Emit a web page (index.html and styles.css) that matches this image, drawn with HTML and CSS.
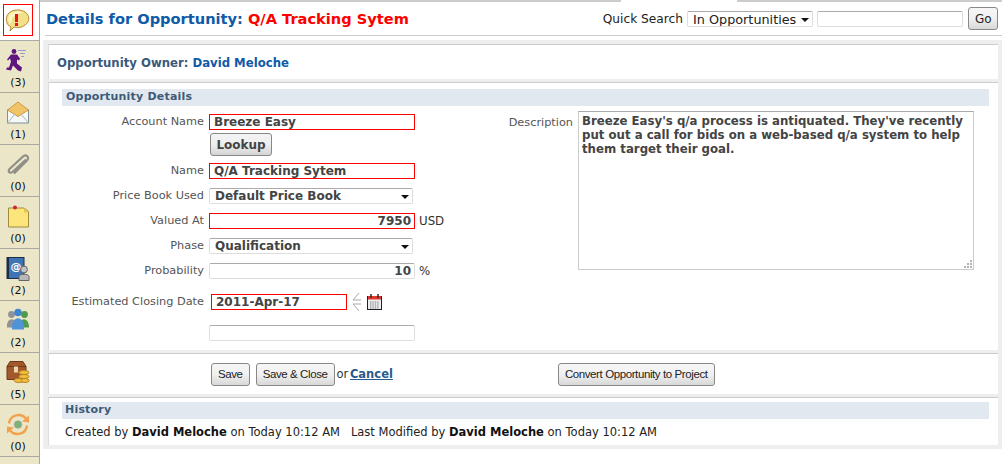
FILE: index.html
```html
<!DOCTYPE html>
<html lang="en">
<head>
    <meta charset="UTF-8">
    <link rel="stylesheet" href="styles.css">
    <title>Details for Opportunity</title>
</head>
<body>
    <nav class="sidebar">
        <div class="alert-box">
            <svg width="28" height="30" viewBox="0 0 28 30">
                <path d="M7 22 C2 20 1 13 4 9 C8 4 17 4 21 7 C26 10 26 17 21 20 C17 23 13 23 10 22 L6 26 Z" fill="#f5e08a" stroke="#b98a2e"/>
                <path d="M6 19 C3 15 4 10 8 8 C11 6 17 6 19 8 C15 8 9 10 8 14 C8 16 7 18 6 19 Z" fill="#fdf6c8"/>
                <rect x="11" y="9" width="3" height="8" fill="#e8141c"/>
                <rect x="11" y="18" width="3" height="3" fill="#e8141c"/>
            </svg>
        </div>
        <a class="side-item">
            <svg width="24" height="24" viewBox="0 0 24 24">
                <circle cx="8" cy="3" r="2.4" fill="#5e1580"/>
                <path d="M5 6 L11 6 L14 10 L13 12 L11 11 L11 15 L16 19 L15 23 L12 22 L7 17 L5 22 L0 21 L1 19 L3 19 L5 13 L4 10 L2 12 L1 11 Z" fill="#5e1580"/>
                <path d="M12 2 H20 M14 5 H19 M15 8 H18" stroke="#9a9ac8"/>
            </svg>
            <span>(3)</span>
        </a>
        <a class="side-item">
            <svg width="24" height="24" viewBox="0 0 24 24">
                <rect x="1.5" y="9.5" width="21" height="13" fill="#f6f8f6" stroke="#7f9098"/>
                <path d="M1.5 9.5 L12 1.5 L22.5 9.5 L12 16 Z" fill="#f2c468" stroke="#c99a48"/>
                <path d="M1.5 22.5 L9 13.5 M22.5 22.5 L15 13.5" stroke="#a9b8bc"/>
            </svg>
            <span>(1)</span>
        </a>
        <a class="side-item">
            <svg width="24" height="24" viewBox="0 0 24 24">
                <path d="M20 6 L7 18 C4 21 1 18 4 15 L17 3 C20 0 24 4 21 7 L8 20" fill="none" stroke="#8f8f88" stroke-width="2.2" transform="translate(0 1)"/>
            </svg>
            <span>(0)</span>
        </a>
        <a class="side-item">
            <svg width="24" height="24" viewBox="0 0 24 24">
                <path d="M2.5 3.5 H18 L22.5 7 V22.5 H2.5 Z" fill="#fce67c" stroke="#a08a3c"/>
                <path d="M18 3.5 V8 H22.5 Z" fill="#e6c850"/>
                <circle cx="9" cy="3" r="2" fill="#d0223a"/>
            </svg>
            <span>(0)</span>
        </a>
        <a class="side-item">
            <svg width="24" height="24" viewBox="0 0 24 24">
                <rect x="1" y="1" width="17" height="21" fill="#3f74b4" stroke="#1c2c44"/>
                <rect x="1" y="1" width="2" height="21" fill="#1c2c44"/>
                <text class="at-sign" x="4.5" y="13">@</text>
                <circle cx="18" cy="13" r="3.4" fill="#c4c4c4" stroke="#666"/>
                <path d="M13 24 V20 C13 17 23 17 23 20 V24 Z" fill="#b8b8b8" stroke="#666"/>
            </svg>
            <span>(2)</span>
        </a>
        <a class="side-item">
            <svg width="24" height="24" viewBox="0 0 24 24">
                <circle cx="5.5" cy="6" r="3.4" fill="#8f9296"/>
                <path d="M1 19 C0 8 11 8 11 19 Z" fill="#8f9296"/>
                <circle cx="18.5" cy="6" r="3.4" fill="#4f9a4c"/>
                <path d="M13 19 C13 8 23 8 23 19 Z" fill="#4f9a4c"/>
                <circle cx="12" cy="4" r="3.8" fill="#3f86cc"/>
                <path d="M6 21 C5 6 19 6 18 21 Z" fill="#4f94d8"/>
            </svg>
            <span>(2)</span>
        </a>
        <a class="side-item">
            <svg width="24" height="24" viewBox="0 0 24 24">
                <path d="M1 6 L4 1 H17 L20 6 V19 H1 Z" fill="#a3582c" stroke="#6a3a1e"/>
                <path d="M1 6 H20" stroke="#6a3a1e"/>
                <rect x="8" y="6" width="4" height="6" fill="#e8d8b0"/>
                <ellipse cx="18" cy="12" rx="5" ry="2" fill="#f2c040" stroke="#b88420"/>
                <ellipse cx="18" cy="16" rx="5" ry="2" fill="#f2c040" stroke="#b88420"/>
                <ellipse cx="13" cy="20" rx="5" ry="2" fill="#f2c040" stroke="#b88420"/>
                <ellipse cx="19" cy="20" rx="4" ry="2" fill="#f2c040" stroke="#b88420"/>
            </svg>
            <span>(5)</span>
        </a>
        <a class="side-item">
            <svg width="24" height="24" viewBox="0 0 24 24">
                <path d="M3 11 C4 2 15 0 20 6" fill="none" stroke="#f2a24c" stroke-width="2.4"/>
                <path d="M21 13 C20 22 9 24 4 18" fill="none" stroke="#f2a24c" stroke-width="2.4"/>
                <path d="M23 3 L23 10 L16 9 Z M1 21 L1 14 L8 15 Z" fill="#f2a24c"/>
                <circle cx="12" cy="12" r="3.8" fill="#7fb27a" stroke="#9aa59a" stroke-width=".6"/>
            </svg>
            <span>(0)</span>
        </a>
    </nav>

    <div class="page">
        <header class="topbar">
            <h1>Details for Opportunity: <em>Q/A Tracking Sytem</em></h1>
            <form class="quick-search">
                <label>Quick Search</label>
                <div class="select-wrap search-scope">
                    <select><option>In Opportunities</option></select>
                </div>
                <input class="search-box" type="text">
                <button class="btn go" type="button">Go</button>
            </form>
        </header>

        <main class="content">
            <section class="card owner">
                Opportunity Owner: <a>David Meloche</a>
            </section>

            <section class="card details">
                <h2 class="bar">Opportunity Details</h2>
                <div class="columns">
                    <div class="fields">
                        <div class="row">
                            <label>Account Name</label>
                            <input class="field req" type="text" value="Breeze Easy">
                        </div>
                        <div class="row lookup-row">
                            <label></label>
                            <button class="lookup" type="button">Lookup</button>
                        </div>
                        <div class="row">
                            <label>Name</label>
                            <input class="field req" type="text" value="Q/A Tracking Sytem">
                        </div>
                        <div class="row">
                            <label>Price Book Used</label>
                            <div class="select-wrap">
                                <select><option>Default Price Book</option></select>
                            </div>
                        </div>
                        <div class="row">
                            <label>Valued At</label>
                            <input class="field req num" type="text" value="7950">
                            <span class="unit">USD</span>
                        </div>
                        <div class="row">
                            <label>Phase</label>
                            <div class="select-wrap">
                                <select><option>Qualification</option></select>
                            </div>
                        </div>
                        <div class="row">
                            <label>Probability</label>
                            <input class="field num" type="text" value="10">
                            <span class="unit">%</span>
                        </div>
                        <div class="row date-row">
                            <label>Estimated Closing Date</label>
                            <input class="field req date" type="text" value="2011-Apr-17">
                            <svg class="arrows" width="9" height="20" viewBox="0 0 9 20">
                                <path d="M7 1 L1 8 H9 M7 19 L1 12 H9" fill="none" stroke="#a8a8a8"/>
                            </svg>
                            <svg class="calendar" width="15" height="16" viewBox="0 0 15 16">
                                <rect x="0.5" y="2.5" width="14" height="13" fill="#eee" stroke="#222"/>
                                <rect x="1" y="2" width="13" height="3.5" fill="#e2362f"/>
                                <path d="M4 0 V4 M11 0 V4" stroke="#222" stroke-width="1.4"/>
                                <path d="M3 8 H12 M3 10 H12 M3 12 H12 M3 14 H12" stroke="#778" stroke-dasharray="1.4 1"/>
                            </svg>
                        </div>
                        <div class="row">
                            <label></label>
                            <input class="field" type="text">
                        </div>
                    </div>
                    <div class="desc">
                        <label>Description</label>
                        <div class="desc-box">
                            <textarea>Breeze Easy's q/a process is antiquated. They've recently put out a call for bids on a web-based q/a system to help them target their goal.</textarea>
                            <svg class="grip" width="8" height="8" viewBox="0 0 8 8">
                                <path d="M6 0 h2 v2 h-2 z M3 3 h2 v2 h-2 z M6 3 h2 v2 h-2 z M0 6 h2 v2 h-2 z M3 6 h2 v2 h-2 z M6 6 h2 v2 h-2 z" fill="#b4b4b4"/>
                            </svg>
                        </div>
                    </div>
                </div>
            </section>

            <section class="card actions">
                <button class="btn" type="button">Save</button>
                <button class="btn" type="button">Save &amp; Close</button>
                <span class="or">or <a>Cancel</a></span>
                <button class="btn convert" type="button">Convert Opportunity to Project</button>
            </section>

            <section class="card history">
                <h2 class="bar">History</h2>
                <p>Created by <b>David Meloche</b> on Today 10:12 AM &nbsp; Last Modified by <b>David Meloche</b> on Today 10:12 AM</p>
            </section>
        </main>
    </div>
</body>
</html>
```
FILE: styles.css
```css
* {
    box-sizing: border-box;
}
html, body {
    margin: 0;
    height: 464px;
    overflow: hidden;
}
body {
    display: flex;
    background: #fff;
    font-family: "DejaVu Sans", Verdana, sans-serif;
    font-size: 11px;
    color: #333;
}

/* left icon strip */
.sidebar {
    width: 40px;
    flex: none;
    background: #ece6c9;
    border-right: 1px solid #a8a8a0;
}
.alert-box {
    height: 41px;
    padding: 4px 3px;
    background: #fff;
    border-bottom: 1px solid #aaa;
}
.alert-box svg {
    display: block;
    width: 30px;
    height: 32px;
    border: 1px solid #f00;
}
.side-item {
    display: flex;
    flex-direction: column;
    align-items: center;
    height: 52px;
    padding-top: 7px;
    padding-right: 3px;
    border-bottom: 1px solid #aaa9a0;
    color: #111;
}
.side-item svg {
    display: block;
    height: 25px;
}
.side-item span {
    margin-top: 3px;
    line-height: 14px;
}
.at-sign {
    font-size: 11px;
    font-weight: bold;
    fill: #fff;
}

/* header */
.page {
    flex: 1;
    min-width: 0;
    background: linear-gradient(#ccc, #ccc) 0 0 / 581px 2px no-repeat,
                linear-gradient(#ccc, #ccc) 697px 0 / 265px 2px no-repeat;
}
.topbar {
    display: flex;
    justify-content: space-between;
    align-items: center;
    height: 36px;
    margin-left: 5px;
    padding: 2px 0 0 1px;
    border-bottom: 1px solid #ccc;
}
h1 {
    margin: 0;
    font-size: 14.6px;
    font-weight: bold;
    color: #0f5ba8;
}
h1 em {
    font-style: normal;
    color: #f00;
}
.quick-search {
    display: flex;
    align-items: center;
    gap: 4px;
    padding-right: 4px;
    font-size: 12.2px;
    color: #222;
}
.select-wrap {
    position: relative;
    width: 204px;
    height: 16px;
    background: #fff;
    border: 1px solid #ddd;
    border-top-color: #aaa;
    border-radius: 2px;
}
.select-wrap::after {
    content: "";
    position: absolute;
    right: 3px;
    top: 6px;
    border: 4px solid transparent;
    border-top-color: #111;
    border-bottom: 0;
}
select {
    display: block;
    width: 100%;
    height: 100%;
    padding: 0 0 0 5px;
    border: 0;
    background: none;
    appearance: none;
    font: bold 12px "DejaVu Sans", Verdana, sans-serif;
    color: #444;
}
.search-scope {
    width: 126px;
}
.search-scope select {
    font-weight: normal;
    font-size: 12.8px;
    color: #222;
}
.search-box {
    width: 146px;
    height: 16px;
    border: 1px solid #ddd;
    border-top-color: #aaa;
    border-radius: 2px;
}
.btn {
    height: 23px;
    padding: 0 6px;
    border: 1px solid #888;
    border-radius: 3px;
    background: linear-gradient(#f6f6f6, #f0f0f0 50%, #d8d8d8);
    font: 11.5px "Liberation Sans", Arial, sans-serif;
    letter-spacing: -.4px;
    color: #222;
}
.go {
    width: 30px;
    margin-left: 1px;
    font: 12px "DejaVu Sans", Verdana, sans-serif;
    letter-spacing: 0;
}

/* main panels */
.content {
    display: flex;
    flex-direction: column;
    gap: 3px;
    height: 409px;
    margin: 4px 0 0 3px;
    padding: 4px 4px 4px 5px;
    background: #eee;
}
.card {
    background: #fff;
    border-top: 1px solid #ccc;
    border-left: 1px solid #ddd;
}
.owner {
    height: 35px;
    padding: 1px 0 0 8px;
    font-size: 11.7px;
    font-weight: bold;
    line-height: 35px;
    color: #3a5a7c;
}
.owner a {
    color: #0f5ba8;
}
.details {
    height: 268px;
    padding: 6px 9px 0 13px;
}
.bar {
    height: 17px;
    margin: 0;
    padding-left: 4px;
    background: #e2e8ef;
    font-size: 11px;
    font-weight: bold;
    line-height: 15px;
    color: #3d5a78;
    letter-spacing: .2px;
}
.columns {
    display: flex;
    padding-top: 3px;
}
.fields {
    width: 440px;
    margin-left: -14px;
}
.row {
    display: flex;
    align-items: center;
    height: 25px;
    font-size: 11.3px;
    color: #555;
}
.row label {
    width: 161px;
    flex: none;
    padding-right: 5px;
    text-align: right;
}
.field {
    width: 206px;
    height: 16px;
    padding: 0 3px 0 4px;
    border: 1px solid #ddd;
    border-top-color: #aaa;
    border-radius: 2px;
    font: bold 12px "DejaVu Sans", Verdana, sans-serif;
    color: #444;
}
.req {
    border: 1px solid #f00;
    border-radius: 0;
}
.num {
    text-align: right;
}
.unit {
    margin-left: 4px;
    font-size: 11.8px;
    color: #333;
}
.lookup {
    width: 62px;
    height: 23px;
    margin: -1px 0 0 1px;
    padding: 0;
    border: 1px solid #888;
    border-radius: 3px;
    background: linear-gradient(#f4f4f4, #eee 50%, #d4d4d4);
    font: bold 12px "DejaVu Sans", Verdana, sans-serif;
    color: #444;
}
.lookup-row {
    align-items: flex-start;
    height: 24px;
}
.date-row {
    height: 37px;
}
.date {
    width: 136px;
    margin-left: 2px;
}
.arrows {
    margin-left: 5px;
}
.calendar {
    margin-left: 6px;
}
.desc {
    display: flex;
    flex: 1;
    padding-top: 2px;
    font-size: 11.3px;
    color: #555;
}
.desc label {
    width: 90px;
    padding: 5px 5px 0 0;
    text-align: right;
}
.desc-box {
    position: relative;
    width: 396px;
    height: 159px;
}
textarea {
    display: block;
    width: 100%;
    height: 100%;
    padding: 2px 3px;
    border: 1px solid #ccc;
    border-top-color: #aaa;
    resize: none;
    font: bold 11.75px "DejaVu Sans", Verdana, sans-serif;
    color: #444;
}
.grip {
    position: absolute;
    right: 2px;
    bottom: 2px;
}
.actions {
    display: flex;
    align-items: center;
    height: 41px;
    padding-left: 162px;
}
.actions .btn + .btn {
    margin-left: 6px;
}
.actions .or {
    margin-left: 2px;
    font-size: 11.5px;
    word-spacing: -2px;
    color: #333;
}
.or a {
    font-weight: bold;
    text-decoration: underline;
    color: #2a5a8c;
}
.actions .btn.convert {
    margin-left: 165px;
}
.history {
    flex: 1;
    padding: 4px 9px 0 13px;
}
.history .bar {
    padding-left: 3px;
}
.history p {
    margin: 6px 0 0 3px;
    font-size: 11.5px;
    color: #222;
}
.history b {
    color: #111;
}
```
